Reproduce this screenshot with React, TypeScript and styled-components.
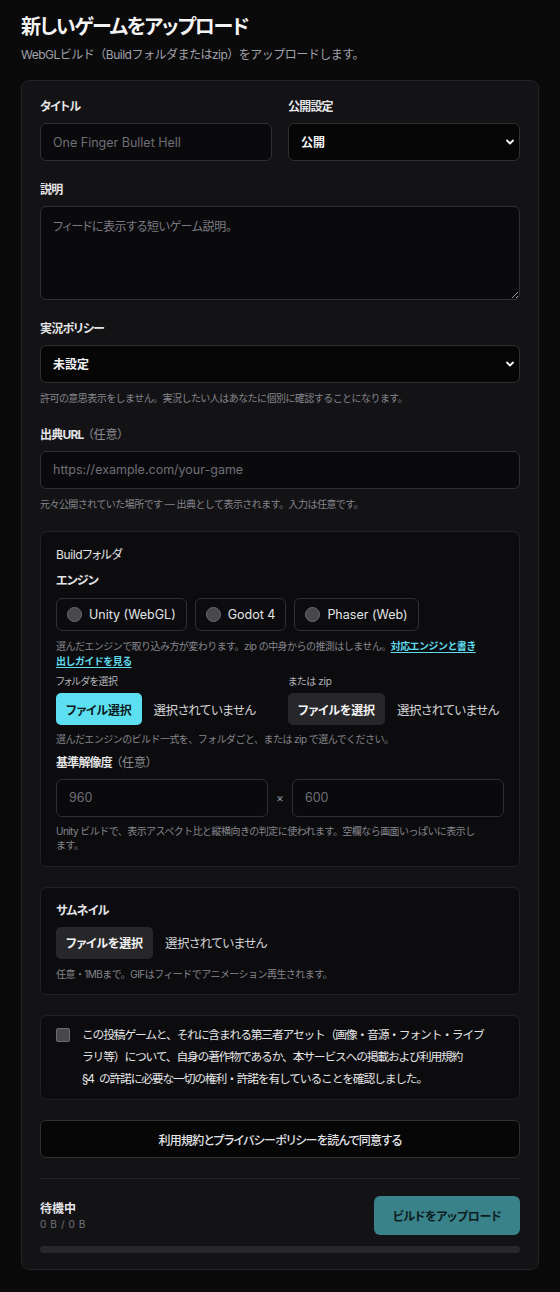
import React from 'react';
import styled, { createGlobalStyle } from 'styled-components';

const GlobalStyle = createGlobalStyle`
  html, body {
    margin: 0;
    background: #0a0a0b;
  }
  body {
    font-family: Inter, "Noto Sans CJK JP", sans-serif;
    font-feature-settings: "palt";
    color: #e4e4e7;
  }
  * { box-sizing: border-box; }
`;

const Page = styled.main`
  padding: 12px 21px 20px;
`;

const Heading = styled.h1`
  margin: 0;
  font-size: 20px;
  line-height: 30px;
  font-weight: 700;
  letter-spacing: -1.3px;
  color: #f4f4f5;
`;

const Lead = styled.p`
  margin: 4px 0 16px;
  font-size: 12px;
  line-height: 18px;
  font-feature-settings: normal;
  letter-spacing: -0.5px;
  color: #a1a1aa;
`;

const Card = styled.form`
  display: flex;
  flex-direction: column;
  gap: 20px;
  padding: 17px 18px 16px;
  background: #131315;
  border: 1px solid #232327;
  border-radius: 8px;
`;

const Panel = styled.section<{ $tight?: boolean }>`
  display: flex;
  flex-direction: column;
  padding: ${({ $tight }) => ($tight ? '8px 15px 9px' : '14px 15px 13px')};
  background: #0c0c0e;
  border: 1px solid #222226;
  border-radius: 7px;
`;

const Row = styled.div`
  display: grid;
  grid-template-columns: 1fr 1fr;
  gap: 16px;
`;

const Field = styled.div<{ $gap?: number }>`
  display: flex;
  flex-direction: column;
  gap: ${({ $gap }) => $gap ?? 8}px;
  min-width: 0;
`;

const Label = styled.label<{ $top?: number }>`
  margin-top: ${({ $top }) => $top ?? 0}px;
  font-size: 12px;
  line-height: 17px;
  font-weight: 700;
  letter-spacing: -0.8px;
  color: #e4e4e7;
`;

const Optional = styled.span`
  font-weight: 400;
  color: #8b8b93;
  margin-left: 4px;
  letter-spacing: 0;
`;

const SmallLabel = styled.span`
  font-size: 10px;
  line-height: 14px;
  letter-spacing: -0.3px;
  color: #b4b4bb;
`;

const Hint = styled.p<{ $inset?: number }>`
  margin: 0;
  padding-right: ${({ $inset }) => $inset ?? 0}px;
  font-size: 10px;
  line-height: 14.5px;
  font-feature-settings: normal;
  letter-spacing: -0.55px;
  color: #85858d;
`;

const GuideLink = styled.a`
  color: #5fdcef;
  font-weight: 700;
  text-decoration: underline;
  text-underline-offset: 2px;
`;

const TextInput = styled.input`
  width: 100%;
  height: 38px;
  padding: 0 12px;
  background: #0a0a0c;
  border: 1px solid #2f2f34;
  border-radius: 6px;
  font: inherit;
  font-size: 12.5px;
  color: #e4e4e7;
  outline: none;
  &::placeholder { color: #6e6e76; }
`;

const TextArea = styled.textarea`
  width: 100%;
  height: 94px;
  padding: 10px 12px;
  background: #0a0a0c;
  border: 1px solid #2f2f34;
  border-radius: 6px;
  font: inherit;
  font-size: 12px;
  letter-spacing: -0.4px;
  color: #e4e4e7;
  resize: vertical;
  outline: none;
  &::placeholder { color: #7a7a82; }
`;

const SelectBox = styled.div`
  position: relative;
`;

const Select = styled.select`
  width: 100%;
  height: 38px;
  padding: 0 12px;
  appearance: none;
  background: #060607;
  border: 1px solid #2f2f34;
  border-radius: 6px;
  font: inherit;
  font-size: 12px;
  font-weight: 700;
  color: #f4f4f5;
  outline: none;
`;

const Chevron = styled.svg`
  position: absolute;
  right: 5px;
  top: 50%;
  width: 10px;
  height: 10px;
  transform: translateY(-50%);
  pointer-events: none;
`;

const PanelTitle = styled.div`
  font-size: 12px;
  line-height: 17px;
  letter-spacing: -0.4px;
  color: #e4e4e7;
  margin-bottom: 9px;
`;

const EngineList = styled.div`
  display: flex;
  gap: 8px;
  margin: 9px 0 8px;
`;

const EngineOption = styled.label`
  display: flex;
  align-items: center;
  gap: 7px;
  height: 33px;
  padding: 0 10px;
  border: 1px solid #303035;
  border-radius: 6px;
  font-size: 12.5px;
  color: #e4e4e7;
`;

const RadioDot = styled.span`
  width: 15px;
  height: 15px;
  border-radius: 50%;
  background: #47474c;
  border: 1px solid #6a6a70;
`;

const PickerGrid = styled(Row)`
  margin: 6px 0 7px;
`;

const Picker = styled.div`
  display: flex;
  flex-direction: column;
  gap: 5px;
`;

const PickerLine = styled.div`
  display: flex;
  align-items: center;
  gap: 12px;
`;

const FileButton = styled.button<{ $accent?: boolean }>`
  height: 32px;
  padding: 0 10px;
  border: none;
  border-radius: 5px;
  background: ${({ $accent }) => ($accent ? '#5ddff2' : '#27272a')};
  color: ${({ $accent }) => ($accent ? '#0b1b20' : '#f4f4f5')};
  font: inherit;
  font-size: 12px;
  font-weight: 700;
  letter-spacing: -0.2px;
  white-space: nowrap;
`;

const NoFile = styled.span`
  font-size: 12.5px;
  letter-spacing: -0.5px;
  color: #d4d4d8;
  white-space: nowrap;
`;

const SizeRow = styled.div`
  display: flex;
  align-items: center;
  gap: 8px;
  margin: 8px 0 7px;
`;

const Times = styled.span`
  font-size: 12px;
  color: #8b8b93;
`;

const ConsentLine = styled.label`
  display: flex;
  align-items: flex-start;
  gap: 12px;
  color: #e4e4e7;
`;

const ConsentText = styled.span`
  max-width: 406px;
  font-size: 11.8px;
  line-height: 22px;
  font-feature-settings: normal;
  letter-spacing: -1.2px;
  word-spacing: 3px;
`;

const CheckBox = styled.span`
  flex: none;
  width: 14px;
  height: 14px;
  margin-top: 4px;
  border-radius: 2px;
  background: #47474c;
  border: 1px solid #6a6a70;
`;

const AgreeButton = styled.button`
  height: 38px;
  width: 100%;
  background: #060607;
  border: 1px solid #2f2f34;
  border-radius: 6px;
  font: inherit;
  font-size: 12px;
  font-weight: 500;
  letter-spacing: -0.7px;
  color: #e4e4e7;
`;

const Divider = styled.hr`
  margin: 0;
  border: none;
  border-top: 1px solid #26262a;
`;

const Footer = styled.div`
  display: flex;
  flex-direction: column;
  gap: 11px;
  margin-top: -3px;
`;

const StatusRow = styled.div`
  display: flex;
  align-items: center;
  justify-content: space-between;
`;

const Status = styled.div`
  display: flex;
  flex-direction: column;
`;

const StatusTitle = styled.span`
  font-size: 12px;
  line-height: 17px;
  font-weight: 700;
  color: #e4e4e7;
`;

const StatusBytes = styled.span`
  font-size: 10px;
  line-height: 14px;
  letter-spacing: 0.6px;
  color: #75757d;
`;

const UploadButton = styled.button`
  width: 146px;
  height: 39px;
  border: none;
  border-radius: 6px;
  background: #398289;
  color: #0d1c1f;
  font: inherit;
  font-size: 12px;
  font-weight: 700;
  letter-spacing: -0.3px;
`;

const Progress = styled.div`
  height: 7px;
  border-radius: 4px;
  background: #28282c;
  overflow: hidden;
`;

const ProgressFill = styled.div`
  height: 100%;
  background: #5ddff2;
`;

const ChevronIcon = () => (
  <Chevron viewBox="0 0 10 10">
    <path d="M2 3.5 5 6.5 8 3.5" fill="none" stroke="#f4f4f5" strokeWidth="1.8" strokeLinecap="round" strokeLinejoin="round" />
  </Chevron>
);

const engines = ['Unity (WebGL)', 'Godot 4', 'Phaser (Web)'];

export default function App() {
  const uploaded = 0;

  return (
    <Page>
      <GlobalStyle />
      <Heading>新しいゲームをアップロード</Heading>
      <Lead>WebGLビルド（Buildフォルダまたはzip）をアップロードします。</Lead>

      <Card onSubmit={(e) => e.preventDefault()}>
        <Row>
          <Field>
            <Label>タイトル</Label>
            <TextInput placeholder="One Finger Bullet Hell" />
          </Field>
          <Field>
            <Label>公開設定</Label>
            <SelectBox>
              <Select defaultValue="public">
                <option value="public">公開</option>
                <option value="unlisted">限定公開</option>
                <option value="private">非公開</option>
              </Select>
              <ChevronIcon />
            </SelectBox>
          </Field>
        </Row>

        <Field>
          <Label>説明</Label>
          <TextArea placeholder="フィードに表示する短いゲーム説明。" />
        </Field>

        <Field>
          <Label>実況ポリシー</Label>
          <SelectBox>
            <Select defaultValue="none">
              <option value="none">未設定</option>
              <option value="allow">実況OK</option>
              <option value="deny">実況NG</option>
            </Select>
            <ChevronIcon />
          </SelectBox>
          <Hint>許可の意思表示をしません。実況したい人はあなたに個別に確認することになります。</Hint>
        </Field>

        <Field>
          <Label>
            出典URL<Optional>（任意）</Optional>
          </Label>
          <TextInput placeholder="https://example.com/your-game" />
          <Hint>元々公開されていた場所です — 出典として表示されます。入力は任意です。</Hint>
        </Field>

        <Panel>
          <PanelTitle>Buildフォルダ</PanelTitle>
          <Label>エンジン</Label>
          <EngineList>
            {engines.map((name) => (
              <EngineOption key={name}>
                <RadioDot />
                {name}
              </EngineOption>
            ))}
          </EngineList>
          <Hint $inset={22}>
            選んだエンジンで取り込み方が変わります。zip の中身からの推測はしません。
            <GuideLink href="#engines">対応エンジンと書き出しガイドを見る</GuideLink>
          </Hint>

          <PickerGrid>
            <Picker>
              <SmallLabel>フォルダを選択</SmallLabel>
              <PickerLine>
                <FileButton type="button" $accent>ファイル選択</FileButton>
                <NoFile>選択されていません</NoFile>
              </PickerLine>
            </Picker>
            <Picker>
              <SmallLabel>または zip</SmallLabel>
              <PickerLine>
                <FileButton type="button">ファイルを選択</FileButton>
                <NoFile>選択されていません</NoFile>
              </PickerLine>
            </Picker>
          </PickerGrid>
          <Hint>選んだエンジンのビルド一式を、フォルダごと、または zip で選んでください。</Hint>

          <Label $top={7}>
            基準解像度<Optional>（任意）</Optional>
          </Label>
          <SizeRow>
            <TextInput placeholder="960" />
            <Times>×</Times>
            <TextInput placeholder="600" />
          </SizeRow>
          <Hint $inset={22}>
            Unity ビルドで、表示アスペクト比と縦横向きの判定に使われます。空欄なら画面いっぱいに表示します。
          </Hint>
        </Panel>

        <Panel>
          <Field $gap={8}>
            <Label>サムネイル</Label>
            <PickerLine>
              <FileButton type="button">ファイルを選択</FileButton>
              <NoFile>選択されていません</NoFile>
            </PickerLine>
            <Hint>任意・1MBまで。GIFはフィードでアニメーション再生されます。</Hint>
          </Field>
        </Panel>

        <Panel $tight>
          <ConsentLine>
            <CheckBox />
            <ConsentText>
              この投稿ゲームと、それに含まれる第三者アセット（画像・音源・フォント・ライブラリ等）について、自身の著作物であるか、本サービスへの掲載および利用規約 §4{'\u00a0'}の許諾に必要な一切の権利・許諾を有していることを確認しました。
            </ConsentText>
          </ConsentLine>
        </Panel>

        <AgreeButton type="button">利用規約とプライバシーポリシーを読んで同意する</AgreeButton>

        <Divider />

        <Footer>
          <StatusRow>
            <Status>
              <StatusTitle>待機中</StatusTitle>
              <StatusBytes>0 B / 0 B</StatusBytes>
            </Status>
            <UploadButton type="submit">ビルドをアップロード</UploadButton>
          </StatusRow>
          <Progress>
            <ProgressFill style={{ width: `${uploaded}%` }} />
          </Progress>
        </Footer>
      </Card>
    </Page>
  );
}
